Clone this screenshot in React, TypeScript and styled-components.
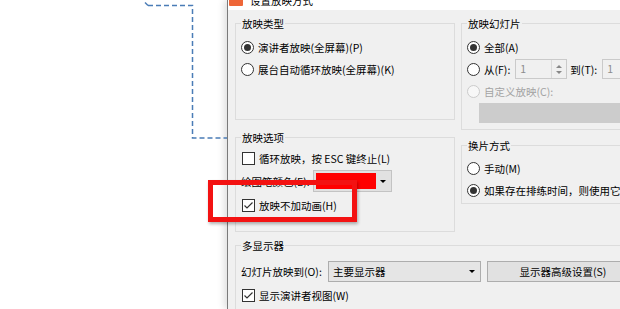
import React from 'react';
import styled, { createGlobalStyle } from 'styled-components';

const GlobalStyle = createGlobalStyle`
  html, body {
    margin: 0;
    padding: 0;
    background: #fff;
  }
  body {
    font-family: "Noto Sans CJK SC", "Liberation Sans", sans-serif;
    font-size: 10.5px;
    color: #000;
  }
`;

const Screen = styled.div`
  position: relative;
  width: 620px;
  height: 309px;
  overflow: hidden;
  display: flex;
  background: #fff;
`;

const Canvas = styled.div`
  position: relative;
  width: 227px;
  flex-shrink: 0;
`;

const Connector = styled.svg`
  position: absolute;
  left: 0;
  top: 0;
`;

const Dialog = styled.div`
  flex-shrink: 0;
  width: 480px;
  border-left: 1px solid #7a7a7a;
  background: #f0f0f0;
  box-shadow: -3px 0 7px rgba(0, 0, 0, 0.13);
`;

const TitleBar = styled.div`
  box-sizing: border-box;
  height: 30px;
  margin-top: -20px;
  padding: 0 0 4px 1px;
  display: flex;
  align-items: flex-end;
  gap: 7px;
  background: #fff;
  line-height: 11px;
`;

const AppIcon = styled.span`
  width: 14px;
  height: 14px;
  border-radius: 1px;
  background: #ee6638;
`;

const Body = styled.div`
  padding: 13px 0 0 7px;
`;

const Columns = styled.div`
  display: flex;
  align-items: flex-start;
  gap: 6px;
`;

const Column = styled.div`
  width: 220px;
  display: flex;
  flex-direction: column;
`;

const Group = styled.div<{ $h: number; $top?: number; $w?: number }>`
  box-sizing: border-box;
  height: ${(p) => p.$h}px;
  width: ${(p) => (p.$w ? `${p.$w}px` : 'auto')};
  margin-top: ${(p) => p.$top ?? 0}px;
  border: 1px solid #dcdcdc;
  padding: 0 5px;
`;

const Legend = styled.div`
  width: fit-content;
  margin-top: -8px;
  padding: 0 1px;
  line-height: 16px;
  background: #f0f0f0;
`;

const Rows = styled.div<{ $top: number }>`
  margin-top: ${(p) => p.$top}px;
`;

const Row = styled.div<{ $h?: number; $disabled?: boolean }>`
  display: flex;
  align-items: center;
  height: ${(p) => p.$h ?? 22}px;
  white-space: nowrap;
  color: ${(p) => (p.$disabled ? '#a3a3a3' : '#000')};
`;

const Radio = styled.span<{ $on?: boolean; $disabled?: boolean }>`
  box-sizing: border-box;
  width: 13px;
  height: 13px;
  margin-right: 4px;
  flex-shrink: 0;
  border-radius: 50%;
  border: 1px solid ${(p) => (p.$disabled ? '#cbcbcb' : '#333')};
  background: ${(p) => (p.$disabled ? '#f7f7f7' : '#fff')};
  display: flex;
  align-items: center;
  justify-content: center;

  &::after {
    content: '';
    display: ${(p) => (p.$on ? 'block' : 'none')};
    width: 7px;
    height: 7px;
    border-radius: 50%;
    background: #333;
  }
`;

const Box = styled.span`
  box-sizing: border-box;
  width: 13px;
  height: 13px;
  margin: 0 4px 0 1px;
  flex-shrink: 0;
  border: 1px solid #333;
  background: #fff;
  display: flex;
`;

const Checkbox = ({ on }: { on?: boolean }) => (
  <Box>
    {on && (
      <svg width="11" height="11" viewBox="0 0 11 11">
        <path d="M1.5 5.5 L4 8 L9.5 2.5" fill="none" stroke="#333" strokeWidth="1.2" />
      </svg>
    )}
  </Box>
);

const Spin = styled.div`
  box-sizing: border-box;
  display: flex;
  width: 52px;
  height: 20px;
  margin: 0 3px 0 5px;
  border: 1px solid #cacaca;
  background: #f0f0f0;
`;

const SpinValue = styled.span`
  flex: 1;
  padding-left: 4px;
  line-height: 18px;
  color: #8c8c8c;
`;

const SpinArrows = styled.span`
  width: 14px;
  border-left: 1px solid #dadada;
  display: flex;
  flex-direction: column;
  align-items: center;
  justify-content: center;
  gap: 3px;
`;

const Tri = styled.span<{ $up?: boolean; $color?: string }>`
  width: 0;
  height: 0;
  border-left: 3px solid transparent;
  border-right: 3px solid transparent;
  ${(p) => (p.$up ? 'border-bottom' : 'border-top')}: 3px solid ${(p) => p.$color ?? '#888'};
`;

const DisabledList = styled.div`
  margin: 1px 0 0 12px;
  width: 210px;
  height: 20px;
  background: #cccccc;
`;

const Label = styled.span<{ $w?: number }>`
  width: ${(p) => (p.$w ? `${p.$w}px` : 'auto')};
  flex-shrink: 0;
`;

const ColorPick = styled.div`
  box-sizing: border-box;
  display: flex;
  align-items: center;
  width: 79px;
  height: 22px;
  margin-left: 3px;
  padding-left: 2px;
  border: 1px solid #c3c3c3;
  background: #e1e1e1;
`;

const Swatch = styled.span`
  width: 60px;
  height: 16px;
  background: #ff0000;
`;

const ArrowCell = styled.span`
  flex: 1;
  display: flex;
  justify-content: center;
`;

const Combo = styled.div`
  box-sizing: border-box;
  display: flex;
  align-items: center;
  justify-content: space-between;
  width: 153px;
  height: 21px;
  padding: 0 5px 0 4px;
  border: 1px solid #adadad;
  background: #e5e5e5;
`;

const Button = styled.div`
  box-sizing: border-box;
  display: flex;
  align-items: center;
  justify-content: center;
  width: 152px;
  height: 21px;
  margin-left: 6px;
  border: 1px solid #adadad;
  background: #e1e1e1;
`;

const Highlight = styled.div`
  position: absolute;
  left: 208px;
  top: 180px;
  width: 149px;
  height: 42px;
  box-sizing: border-box;
  border: 5px solid #f31212;
  box-shadow: 1px 2px 3px rgba(0, 0, 0, 0.3);
  pointer-events: none;
`;

export default function App() {
  return (
    <>
      <GlobalStyle />
      <Screen>
        <Canvas>
          <Connector width="227" height="309">
            <path d="M145 2.5 L148 5.5" stroke="#4a7cb6" strokeWidth="1.4" fill="none" />
            <path
              d="M148 5.5 H192.5 V138 H227"
              stroke="#4a7cb6"
              strokeWidth="1.5"
              strokeDasharray="5 3"
              fill="none"
            />
          </Connector>
        </Canvas>
        <Dialog>
          <TitleBar>
            <AppIcon />
            <span>设置放映方式</span>
          </TitleBar>
          <Body>
            <Columns>
              <Column>
                <Group $h={97}>
                  <Legend>放映类型</Legend>
                  <Rows $top={4}>
                    <Row>
                      <Radio $on />
                      演讲者放映(全屏幕)(P)
                    </Row>
                    <Row>
                      <Radio />
                      展台自动循环放映(全屏幕)(K)
                    </Row>
                  </Rows>
                </Group>
                <Group $h={95} $top={17}>
                  <Legend>放映选项</Legend>
                  <Rows $top={1}>
                    <Row>
                      <Checkbox />
                      循环放映，按 ESC 键终止(L)
                    </Row>
                    <Row $h={24}>
                      <Label>绘图笔颜色(E):</Label>
                      <ColorPick>
                        <Swatch />
                        <ArrowCell>
                          <Tri $color="#000" />
                        </ArrowCell>
                      </ColorPick>
                    </Row>
                    <Row $h={24}>
                      <Checkbox on />
                      放映不加动画(H)
                    </Row>
                  </Rows>
                </Group>
              </Column>
              <Column>
                <Group $h={107}>
                  <Legend>放映幻灯片</Legend>
                  <Rows $top={4}>
                    <Row>
                      <Radio $on />
                      全部(A)
                    </Row>
                    <Row>
                      <Radio />
                      从(F):
                      <Spin>
                        <SpinValue>1</SpinValue>
                        <SpinArrows>
                          <Tri $up />
                          <Tri />
                        </SpinArrows>
                      </Spin>
                      到(T):
                      <Spin>
                        <SpinValue>1</SpinValue>
                        <SpinArrows>
                          <Tri $up />
                          <Tri />
                        </SpinArrows>
                      </Spin>
                    </Row>
                    <Row $disabled>
                      <Radio $disabled />
                      自定义放映(C):
                    </Row>
                    <DisabledList />
                  </Rows>
                </Group>
                <Group $h={59} $top={15}>
                  <Legend>换片方式</Legend>
                  <Rows $top={3}>
                    <Row>
                      <Radio />
                      手动(M)
                    </Row>
                    <Row>
                      <Radio $on />
                      如果存在排练时间，则使用它(U)
                    </Row>
                  </Rows>
                </Group>
              </Column>
            </Columns>
            <Group $h={80} $top={13} $w={446}>
              <Legend>多显示器</Legend>
              <Rows $top={6}>
                <Row>
                  <Label $w={87}>幻灯片放映到(O):</Label>
                  <Combo>
                    <span>主要显示器</span>
                    <Tri $color="#000" />
                  </Combo>
                  <Button>显示器高级设置(S)</Button>
                </Row>
                <Row $h={26}>
                  <Checkbox on />
                  显示演讲者视图(W)
                </Row>
              </Rows>
            </Group>
          </Body>
        </Dialog>
        <Highlight />
      </Screen>
    </>
  );
}
